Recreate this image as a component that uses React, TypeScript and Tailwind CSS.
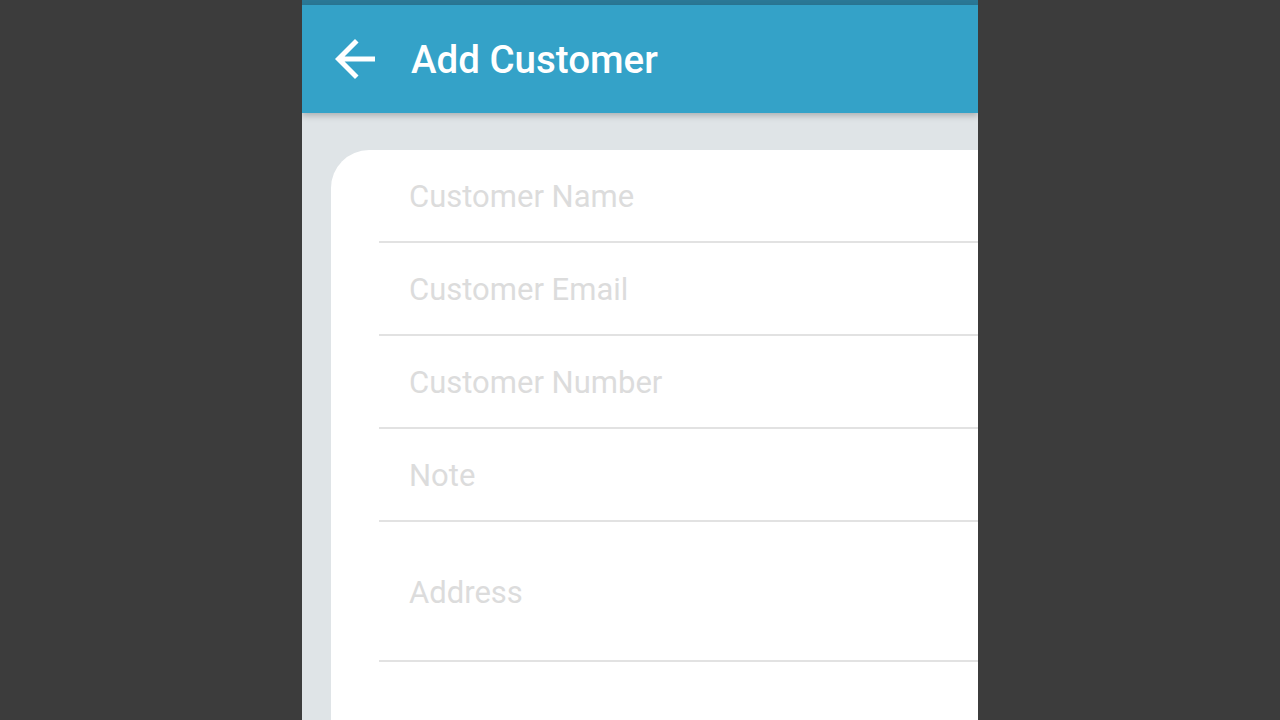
import React from "react";

const fields = [
  { label: "Customer Name", tall: false },
  { label: "Customer Email", tall: false },
  { label: "Customer Number", tall: false },
  { label: "Note", tall: false },
  { label: "Address", tall: true },
];

export default function App() {
  return (
    <div className="flex h-[720px] w-full justify-center overflow-hidden bg-[#3c3c3c] font-['Roboto',sans-serif]">
      <div className="relative flex w-[676px] flex-col overflow-hidden bg-[#dfe4e7]">
        {/* status bar */}
        <div className="h-[5px] w-full bg-[#2a7896]" />

        {/* app bar */}
        <div className="relative z-10 flex h-[108px] items-center bg-[#34a2c8] pl-[23px] shadow-[0_3px_6px_rgba(0,0,0,0.22)]">
          <svg width="60" height="60" viewBox="0 0 24 24" fill="#ffffff">
            <path d="M20 11H7.83l5.59-5.59L12 4l-8 8 8 8 1.41-1.41L7.83 13H20v-2z" />
          </svg>
          <h1 className="ml-[26px] pt-[3px] text-[38.5px] font-medium leading-none text-white">
            Add Customer
          </h1>
        </div>

        {/* form card */}
        <div className="ml-[29px] mt-[37px] w-[700px] flex-1 rounded-tl-[38px] bg-white pl-[48px]">
          {fields.map((f) => (
            <div
              key={f.label}
              className={
                "flex items-center border-b-2 border-[#e2e2e2] pl-[30px] pt-[2px] " +
                (f.tall ? "h-[140px]" : "h-[93px]")
              }
            >
              <span className="text-[31px] leading-none text-[#dcdcdc]">{f.label}</span>
            </div>
          ))}
        </div>
      </div>
    </div>
  );
}
